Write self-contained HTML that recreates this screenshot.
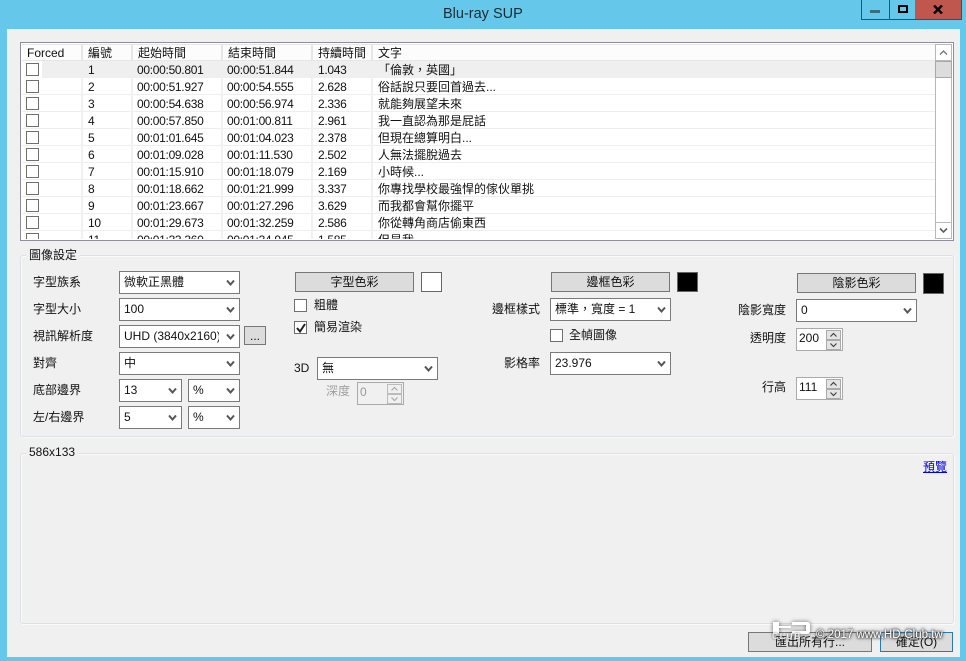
<!DOCTYPE html>
<html><head><meta charset="utf-8"><style>
html,body{margin:0;padding:0}
body{width:966px;height:661px;overflow:hidden;position:relative;background:#65c8ea;font:12px/16px "Liberation Sans","Noto Sans CJK TC",sans-serif;color:#111}
div,a{position:absolute;box-sizing:border-box;white-space:nowrap}
.t{height:16px}
.r{text-align:right}
.s{background:#fff;border:1px solid #7a7a7a;height:23px;line-height:21px;padding-left:4px}
.s svg{position:absolute;right:4px;top:7px}
.b{background:#dcdcdc;border:1px solid #777;height:20px;line-height:18px;text-align:center}
.c{width:13px;height:13px;background:#fff;border:1px solid #6f6f6f}
.sw{border:1px solid #666;width:21px;height:20px}
.h{top:45px;height:15px;background:#fcfcfd;line-height:17px;padding-left:5px}
.row{left:22px;width:913px;height:17px;background:#fff;border-bottom:1px solid #eee}
.cell{top:1px;height:16px;line-height:16px;letter-spacing:-.3px}
.cell:last-child{letter-spacing:0}
.ck{left:4px;top:2px;width:13px;height:13px;border:1px solid #6f6f6f;background:#fff}
.sp{background:#fff;border:1px solid #aaa;width:47px;height:23px;line-height:19px;padding-left:2px}
.sb{right:1px;width:15px;height:10px;background:#e4e4e4;border:1px solid #aaa}
.sb svg{position:absolute;left:3px;top:1px}
</style></head><body>
<div class="t" style="left:443px;top:5px;font-size:14.5px;height:18px;line-height:18px;color:#1c2c34">Blu-ray SUP</div>
<div style="left:861px;top:0;width:29px;height:20px;border:1px solid #2b5566;border-top:0"><div style="left:8px;top:10px;width:10px;height:3px;background:#35707f"></div></div>
<div style="left:889px;top:0;width:27px;height:20px;border:1px solid #2b5566;border-top:0;border-left:0"><div style="left:9px;top:5px;width:10px;height:8px;border:2px solid #000"></div></div>
<div style="left:915px;top:0;width:47px;height:20px;background:#c0574f;border:1px solid #2b5566;border-top:0;border-left:0;"><svg style="position:absolute;left:18px;top:5px" width="10" height="9"><path d="M1 0.5L9 8.5M9 0.5L1 8.5" stroke="#000" stroke-width="2.4"/></svg></div>
<div style="left:7px;top:29px;width:953px;height:628px;background:#f0f0f0"></div>

<div style="left:20px;top:42px;width:934px;height:199px;border:1px solid #8f8f9b;background:#fff"></div>
<div style="left:22px;top:44px;width:913px;height:17px;background:#e6e6e6"></div>
<div class="h" style="left:22px;width:59px">Forced</div>
<div class="h" style="left:83px;width:48px">編號</div>
<div class="h" style="left:133px;width:88px">起始時間</div>
<div class="h" style="left:223px;width:88px">結束時間</div>
<div class="h" style="left:313px;width:58px">持續時間</div>
<div class="h" style="left:373px;width:562px">文字</div>

<div class="row" style="top:61px;background:#efefef;border:0"><div style="left:0;top:0;width:20px;height:17px;background:#fff"></div><div class="ck"></div><div class="cell" style="left:66px">1</div><div class="cell" style="left:115px">00:00:50.801</div><div class="cell" style="left:205px">00:00:51.844</div><div class="cell" style="left:296px">1.043</div><div class="cell" style="left:356px">「倫敦，英國」</div></div>
<div class="row" style="top:78px"><div class="ck"></div><div class="cell" style="left:66px">2</div><div class="cell" style="left:115px">00:00:51.927</div><div class="cell" style="left:205px">00:00:54.555</div><div class="cell" style="left:296px">2.628</div><div class="cell" style="left:356px">俗話說只要回首過去...</div></div>
<div class="row" style="top:95px"><div class="ck"></div><div class="cell" style="left:66px">3</div><div class="cell" style="left:115px">00:00:54.638</div><div class="cell" style="left:205px">00:00:56.974</div><div class="cell" style="left:296px">2.336</div><div class="cell" style="left:356px">就能夠展望未來</div></div>
<div class="row" style="top:112px"><div class="ck"></div><div class="cell" style="left:66px">4</div><div class="cell" style="left:115px">00:00:57.850</div><div class="cell" style="left:205px">00:01:00.811</div><div class="cell" style="left:296px">2.961</div><div class="cell" style="left:356px">我一直認為那是屁話</div></div>
<div class="row" style="top:129px"><div class="ck"></div><div class="cell" style="left:66px">5</div><div class="cell" style="left:115px">00:01:01.645</div><div class="cell" style="left:205px">00:01:04.023</div><div class="cell" style="left:296px">2.378</div><div class="cell" style="left:356px">但現在總算明白...</div></div>
<div class="row" style="top:146px"><div class="ck"></div><div class="cell" style="left:66px">6</div><div class="cell" style="left:115px">00:01:09.028</div><div class="cell" style="left:205px">00:01:11.530</div><div class="cell" style="left:296px">2.502</div><div class="cell" style="left:356px">人無法擺脫過去</div></div>
<div class="row" style="top:163px"><div class="ck"></div><div class="cell" style="left:66px">7</div><div class="cell" style="left:115px">00:01:15.910</div><div class="cell" style="left:205px">00:01:18.079</div><div class="cell" style="left:296px">2.169</div><div class="cell" style="left:356px">小時候...</div></div>
<div class="row" style="top:180px"><div class="ck"></div><div class="cell" style="left:66px">8</div><div class="cell" style="left:115px">00:01:18.662</div><div class="cell" style="left:205px">00:01:21.999</div><div class="cell" style="left:296px">3.337</div><div class="cell" style="left:356px">你專找學校最強悍的傢伙單挑</div></div>
<div class="row" style="top:197px"><div class="ck"></div><div class="cell" style="left:66px">9</div><div class="cell" style="left:115px">00:01:23.667</div><div class="cell" style="left:205px">00:01:27.296</div><div class="cell" style="left:296px">3.629</div><div class="cell" style="left:356px">而我都會幫你擺平</div></div>
<div class="row" style="top:214px"><div class="ck"></div><div class="cell" style="left:66px">10</div><div class="cell" style="left:115px">00:01:29.673</div><div class="cell" style="left:205px">00:01:32.259</div><div class="cell" style="left:296px">2.586</div><div class="cell" style="left:356px">你從轉角商店偷東西</div></div>
<div class="row" style="top:231px;height:8px;overflow:hidden;border:0"><div class="ck" style="height:14px"></div><div class="cell" style="left:66px">11</div><div class="cell" style="left:115px">00:01:33.360</div><div class="cell" style="left:205px">00:01:34.945</div><div class="cell" style="left:296px">1.585</div><div class="cell" style="left:356px">但是我</div></div>
<div style="left:81px;top:78px;width:2px;height:161px;background:#f0f0f0"></div>
<div style="left:131px;top:78px;width:2px;height:161px;background:#f0f0f0"></div>
<div style="left:221px;top:78px;width:2px;height:161px;background:#f0f0f0"></div>
<div style="left:311px;top:78px;width:2px;height:161px;background:#f0f0f0"></div>
<div style="left:371px;top:78px;width:2px;height:161px;background:#f0f0f0"></div>

<div style="left:935px;top:44px;width:17px;height:195px;background:#fff;border:1px solid #b8b8b8"></div>
<div style="left:935px;top:60px;width:17px;height:1px;background:#b8b8b8"></div>
<div style="left:935px;top:61px;width:17px;height:17px;background:#dcdcdc;border:1px solid #a8a8a8"></div>
<div style="left:935px;top:222px;width:17px;height:1px;background:#b8b8b8"></div>
<svg style="position:absolute;left:939px;top:49px" width="9" height="7"><path d="M1 5.5L4.5 2L8 5.5" fill="none" stroke="#707070" stroke-width="1.3"/></svg>
<svg style="position:absolute;left:939px;top:227px" width="9" height="7"><path d="M1 1.5L4.5 5L8 1.5" fill="none" stroke="#606060" stroke-width="1.6"/></svg>

<div style="left:20px;top:255px;width:934px;height:182px;border:1px solid #dce1e7;border-radius:3px;box-shadow:inset 1px 1px 0 #fafafa,1px 1px 0 #fafafa"></div>
<div class="t" style="left:26px;top:247px;background:#f0f0f0;padding:0 3px">圖像設定</div>
<div style="left:20px;top:453px;width:934px;height:171px;border:1px solid #dce1e7;border-radius:3px;box-shadow:inset 1px 1px 0 #fafafa,1px 1px 0 #fafafa"></div>
<div class="t" style="left:26px;top:444px;background:#f0f0f0;padding:0 3px">586x133</div>
<a style="left:923px;top:459px;color:#0000ee;text-decoration:underline;line-height:16px">預覽</a>

<div class="t" style="left:33px;top:274px">字型族系</div>
<div class="t" style="left:33px;top:301px">字型大小</div>
<div class="t" style="left:33px;top:328px">視訊解析度</div>
<div class="t" style="left:33px;top:355px">對齊</div>
<div class="t" style="left:33px;top:382px">底部邊界</div>
<div class="t" style="left:33px;top:409px">左/右邊界</div>

<div class="s" style="left:119px;top:271px;width:121px">微軟正黑體<svg width="9" height="8"><path d="M1 1.5L4.5 5.5L8 1.5" fill="none" stroke="#555" stroke-width="2"/></svg></div>
<div class="s" style="left:119px;top:298px;width:121px">100<svg width="9" height="8"><path d="M1 1.5L4.5 5.5L8 1.5" fill="none" stroke="#555" stroke-width="2"/></svg></div>
<div class="s" style="left:119px;top:325px;width:121px">UHD (3840x2160)<div style="right:0;top:0;width:20px;height:21px;background:#fff"></div><svg width="9" height="8"><path d="M1 1.5L4.5 5.5L8 1.5" fill="none" stroke="#555" stroke-width="2"/></svg></div>
<div class="b" style="left:244px;top:326px;width:22px;height:19px;line-height:19px">...</div>
<div class="s" style="left:119px;top:352px;width:121px">中<svg width="9" height="8"><path d="M1 1.5L4.5 5.5L8 1.5" fill="none" stroke="#555" stroke-width="2"/></svg></div>
<div class="s" style="left:119px;top:379px;width:63px">13<svg width="9" height="8"><path d="M1 1.5L4.5 5.5L8 1.5" fill="none" stroke="#555" stroke-width="2"/></svg></div>
<div class="s" style="left:188px;top:379px;width:52px">%<svg width="9" height="8"><path d="M1 1.5L4.5 5.5L8 1.5" fill="none" stroke="#555" stroke-width="2"/></svg></div>
<div class="s" style="left:119px;top:406px;width:63px">5<svg width="9" height="8"><path d="M1 1.5L4.5 5.5L8 1.5" fill="none" stroke="#555" stroke-width="2"/></svg></div>
<div class="s" style="left:188px;top:406px;width:52px">%<svg width="9" height="8"><path d="M1 1.5L4.5 5.5L8 1.5" fill="none" stroke="#555" stroke-width="2"/></svg></div>

<div class="b" style="left:295px;top:272px;width:119px">字型色彩</div>
<div class="sw" style="left:421px;top:272px;background:#fff"></div>
<div class="c" style="left:294px;top:299px"></div>
<div class="t" style="left:314px;top:297px">粗體</div>
<div class="c" style="left:294px;top:321px"><svg style="position:absolute;left:1px;top:1px" width="10" height="10"><path d="M1 5L4 8.5L9 1" fill="none" stroke="#222" stroke-width="2"/></svg></div>
<div class="t" style="left:314px;top:319px">簡易渲染</div>
<div class="t" style="left:294px;top:360px">3D</div>
<div class="s" style="left:317px;top:357px;width:121px">無<svg width="9" height="8"><path d="M1 1.5L4.5 5.5L8 1.5" fill="none" stroke="#555" stroke-width="2"/></svg></div>
<div class="t" style="left:326px;top:383px;color:#a0a0a0">深度</div>
<div class="sp" style="left:357px;top:382px;color:#999;background:#f0f0f0">0<div class="sb" style="top:1px;background:#f0f0f0;border-color:#bbb"><svg width="7" height="6"><path d="M.5 4.5L3.5 1.5L6.5 4.5" fill="none" stroke="#aaa" stroke-width="1.2"/></svg></div><div class="sb" style="top:11px;background:#f0f0f0;border-color:#bbb"><svg width="7" height="6"><path d="M.5 1.5L3.5 4.5L6.5 1.5" fill="none" stroke="#aaa" stroke-width="1.2"/></svg></div></div>

<div class="b" style="left:551px;top:272px;width:119px">邊框色彩</div>
<div class="sw" style="left:677px;top:272px;background:#000"></div>
<div class="t r" style="left:480px;top:301px;width:60px">邊框樣式</div>
<div class="s" style="left:550px;top:298px;width:121px">標準，寬度 = 1<svg width="9" height="8"><path d="M1 1.5L4.5 5.5L8 1.5" fill="none" stroke="#555" stroke-width="2"/></svg></div>
<div class="c" style="left:550px;top:329px"></div>
<div class="t" style="left:569px;top:327px">全幀圖像</div>
<div class="t r" style="left:480px;top:355px;width:60px">影格率</div>
<div class="s" style="left:550px;top:352px;width:121px">23.976<svg width="9" height="8"><path d="M1 1.5L4.5 5.5L8 1.5" fill="none" stroke="#555" stroke-width="2"/></svg></div>

<div class="b" style="left:797px;top:273px;width:119px">陰影色彩</div>
<div class="sw" style="left:923px;top:273px;background:#000;height:21px"></div>
<div class="t r" style="left:716px;top:302px;width:70px">陰影寬度</div>
<div class="s" style="left:796px;top:299px;width:121px">0<svg width="9" height="8"><path d="M1 1.5L4.5 5.5L8 1.5" fill="none" stroke="#555" stroke-width="2"/></svg></div>
<div class="t r" style="left:716px;top:330px;width:70px">透明度</div>
<div class="sp" style="left:796px;top:328px">200<div class="sb" style="top:1px"><svg width="7" height="6"><path d="M.5 4.5L3.5 1.5L6.5 4.5" fill="none" stroke="#444" stroke-width="1.2"/></svg></div><div class="sb" style="top:11px"><svg width="7" height="6"><path d="M.5 1.5L3.5 4.5L6.5 1.5" fill="none" stroke="#444" stroke-width="1.2"/></svg></div></div>
<div class="t r" style="left:716px;top:379px;width:70px">行高</div>
<div class="sp" style="left:796px;top:377px">111<div class="sb" style="top:1px"><svg width="7" height="6"><path d="M.5 4.5L3.5 1.5L6.5 4.5" fill="none" stroke="#444" stroke-width="1.2"/></svg></div><div class="sb" style="top:11px"><svg width="7" height="6"><path d="M.5 1.5L3.5 4.5L6.5 1.5" fill="none" stroke="#444" stroke-width="1.2"/></svg></div></div>

<div class="b" style="left:748px;top:632px;width:124px;line-height:19px">匯出所有行...</div>
<div class="b" style="left:880px;top:632px;width:73px;border-color:#2a7ab0;color:#111;line-height:19px">確定(O)</div>

<svg style="position:absolute;left:766px;top:616px;filter:drop-shadow(0 0 2px rgba(0,0,0,.6))" width="50" height="26"><path d="M7 6h6v11.5h-6zM13 10h12v2h-12zM26 6h15q3 0 3 3v6q0 3-3 3h-15v-3h14v-6h-14z" fill="#fff"/></svg>
<div style="left:772px;top:632px;height:9px;line-height:9px;font-size:8.5px;font-weight:bold;letter-spacing:1.6px;color:#eee;text-shadow:0 0 2px #444">CLUB</div>
<div style="left:816px;top:627px;height:16px;line-height:16px;font-size:11.5px;color:#fff;text-shadow:0 0 2px #222,0 0 3px #444,0 0 4px #666">© 2017 www.HD-Club.tw</div>
</body></html>
